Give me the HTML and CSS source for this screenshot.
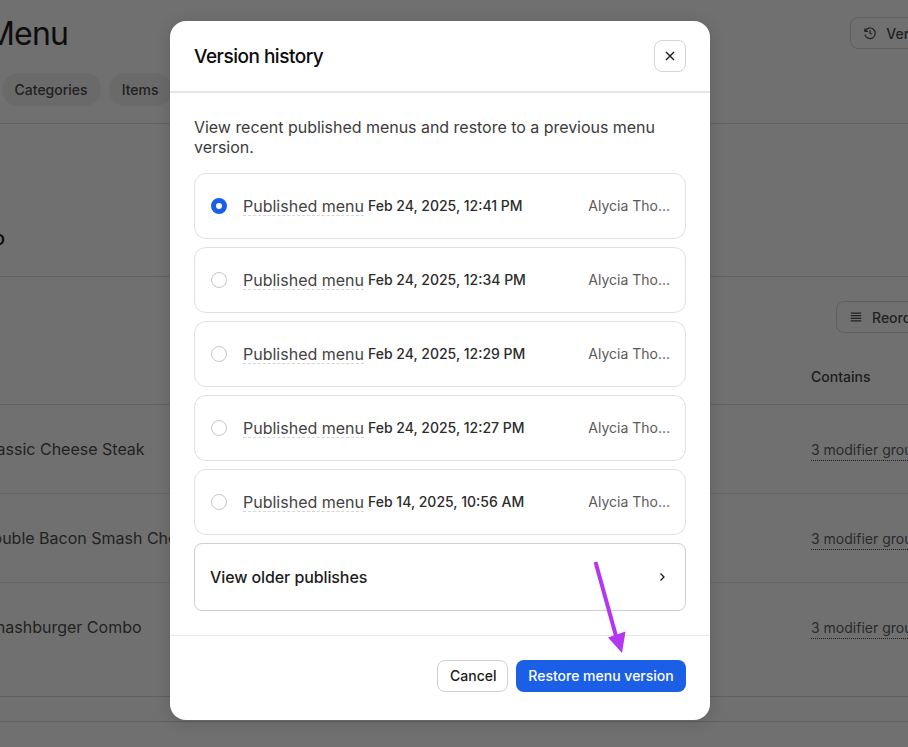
FILE: index.html
```html
<!DOCTYPE html>
<html lang="en">
<head>
<meta charset="utf-8">
<title>Version history</title>
<link rel="stylesheet" href="styles.css">
</head>
<body>
<div class="page">
  <div class="content">
    <header class="top">
      <div class="title-row">
        <h1 class="title">Menu</h1>
        <button class="ghost ghost-version"><svg class="ghost-icon" viewBox="0 0 16 16"><path d="M2.200 2.800v3.400h3.400M2.400 6.200A6 6 0 1 1 2.200 9.800M8 4.800v3.400l2.300 1.300"/></svg>Version history</button>
      </div>
      <nav class="tabs"><span class="tab">Overview</span><span class="tab">Categories</span><span class="tab">Items</span></nav>
    </header>
    <section class="section-head"><h2 class="section-title">Combo</h2></section>
    <div class="toolbar"><button class="ghost ghost-reorder"><svg class="ghost-icon" viewBox="0 0 16 16"><path d="M2 3.500h12M2 6.500h12M2 9.500h12M2 12.500h12"/></svg>Reorder items</button></div>
    <div class="row row-head"><span></span><span class="head-cell">Contains</span></div>
    <div class="row row-a"><span class="name">Classic Cheese Steak</span><span class="mods">3 modifier groups</span></div>
    <div class="row row-a"><span class="name">Double Bacon Smash Cheeseburger</span><span class="mods">3 modifier groups</span></div>
    <div class="row row-b"><span class="name">Smashburger Combo</span><span class="mods">3 modifier groups</span></div>
    <div class="row row-c"></div>
  </div>

  <div class="modal">
    <div class="modal-head">
      <h2 class="modal-title">Version history</h2>
      <button class="close" aria-label="Close"><svg viewBox="0 0 12 12" class="close-icon"><path d="M2 2l8 8M10 2l-8 8"/></svg></button>
    </div>
    <div class="modal-body">
      <p class="intro">View recent published menus and restore to a previous menu version.</p>
      <div class="options">
        <div class="option"><span class="radio radio-on"></span><span class="label">Published menu</span><span class="date">Feb 24, 2025, 12:41 PM</span><span class="author">Alycia Tho...</span></div>
        <div class="option"><span class="radio"></span><span class="label">Published menu</span><span class="date">Feb 24, 2025, 12:34 PM</span><span class="author">Alycia Tho...</span></div>
        <div class="option"><span class="radio"></span><span class="label">Published menu</span><span class="date">Feb 24, 2025, 12:29 PM</span><span class="author">Alycia Tho...</span></div>
        <div class="option"><span class="radio"></span><span class="label">Published menu</span><span class="date">Feb 24, 2025, 12:27 PM</span><span class="author">Alycia Tho...</span></div>
        <div class="option"><span class="radio"></span><span class="label">Published menu</span><span class="date">Feb 14, 2025, 10:56 AM</span><span class="author">Alycia Tho...</span></div>
        <div class="older"><span>View older publishes</span><svg viewBox="0 0 12 12" class="chevron"><path d="M4.500 2.500L8 6l-3.500 3.500"/></svg></div>
      </div>
    </div>
    <div class="modal-foot">
      <button class="btn btn-cancel">Cancel</button>
      <button class="btn btn-primary">Restore menu version</button>
    </div>
  </div>

  <svg class="arrow" viewBox="0 0 908 747"><path class="arrow-shaft" d="M595.500 562L616 636"/><path class="arrow-head" d="M608 637.500L625.500 631.500L622 653Z"/></svg>
</div>
</body>
</html>
```

FILE: styles.css
```css
* { box-sizing: border-box; }
html, body { margin: 0; height: 100%; }
body { font-family: Inter, "Liberation Sans", sans-serif; overflow: hidden; }
button { font-family: inherit; cursor: pointer; }
h1, h2, p { margin: 0; }

.page { position: relative; width: 908px; height: 747px; overflow: hidden; background: #707070; }

.content { width: 1100px; margin-left: -60px; color: #1b1b1b; }

.top { height: 124px; border-bottom: 1px solid #636363; padding-top: 16px; }
.title-row { display: flex; justify-content: space-between; align-items: flex-start; height: 57px; }
.title { font-size: 32px; font-weight: 400; line-height: 36px; color: #0d0d0d; margin-left: 46px; letter-spacing: -0.8px; }
.ghost { display: inline-flex; align-items: center; height: 32px; background: transparent; border: 1px solid #5f5f5f; border-radius: 8px; font-size: 14px; font-weight: 500; color: #222; padding: 0 12px; gap: 9px; white-space: nowrap; }
.ghost-icon { width: 14px; height: 14px; fill: none; stroke: #222; stroke-width: 1.4; flex: none; }
.ghost-version { margin-right: 40px; margin-top: 1px; }

.tabs { display: flex; gap: 8px; margin-left: -36px; }
.tab { height: 33px; padding: 0 13px; border-radius: 17px; background: #6a6a6a; font-size: 14px; font-weight: 500; color: #202020; display: inline-flex; align-items: center; }

.section-head { height: 153px; border-bottom: 1px solid #636363; padding-top: 102px; }
.section-title { font-size: 20px; line-height: 24px; font-weight: 500; color: #0d0d0d; margin-left: -4px; }

.toolbar { display: flex; justify-content: flex-end; padding-top: 24px; height: 72px; }
.ghost-reorder { width: 204px; justify-content: flex-start; }

.row { display: grid; grid-template-columns: 871px 1fr; border-bottom: 1px solid #666; }
.row-head { height: 56px; padding-top: 19px; border-bottom: 1px solid #636363; }
.head-cell { font-size: 14px; font-weight: 500; line-height: 18px; color: #1c1c1c; }
.row-a { height: 89px; padding-top: 34px; }
.row-b { height: 114px; padding-top: 34px; border-bottom-color: #5f5f5f; }
.row-c { height: 25px; border-bottom-color: #5f5f5f; }
.name { font-size: 16px; font-weight: 400; line-height: 20px; color: #222; padding-left: 41px; white-space: nowrap; }
.mods { font-size: 14px; line-height: 18px; color: #2a2a2a; justify-self: start; border-bottom: 1px dotted #222; height: 20px; margin-top: 2px; white-space: nowrap; }

.modal { position: absolute; left: 170px; top: 21px; width: 540px; height: 699px; background: #fff; border-radius: 16px; display: flex; flex-direction: column; box-shadow: 0 2px 16px rgba(0, 0, 0, 0.14); }
.modal-head { height: 72px; display: flex; align-items: center; justify-content: space-between; padding: 0 24px; border-bottom: 2px solid #e6e6e6; }
.modal-title { font-size: 19px; font-weight: 500; line-height: 24px; padding-top: 2px; color: #0c0c0c; letter-spacing: -0.5px; }
.close { width: 32px; height: 32px; padding: 0; display: flex; align-items: center; justify-content: center; background: #fff; border: 1px solid #d4d4d4; border-radius: 8px; }
.close-icon { width: 12px; height: 12px; fill: none; stroke: #1c1c1c; stroke-width: 1.4; }

.modal-body { flex: 1; padding: 24px 24px 0; border-bottom: 1px solid #e6e6e6; }
.intro { font-size: 16px; line-height: 20px; color: #3c3c3c; margin-bottom: 16px; letter-spacing: -0.03px; }
.options { display: flex; flex-direction: column; gap: 8px; }
.option { height: 66px; display: flex; align-items: center; border: 1px solid #e0e0e0; border-radius: 12px; padding: 0 15px 0 16px; }
.radio { width: 16px; height: 16px; border-radius: 50%; border: 1px solid #c8c8c8; flex: none; margin-right: 16px; }
.radio-on { border: 5px solid #1a5fe6; background: #fff; }
.label { font-size: 16px; line-height: 18px; padding-top: 2px; margin-bottom: 1px; color: #444; border-bottom: 1px dashed #d6d6d6; white-space: nowrap; }
.date { font-size: 14px; font-weight: 500; line-height: 16px; color: #2c2c2c; margin-left: 4px; white-space: nowrap; flex: 1; }
.author { font-size: 14px; line-height: 16px; color: #5a5a5a; white-space: nowrap; }
.older { height: 68px; display: flex; align-items: center; justify-content: space-between; border: 1px solid #cfcfcf; border-radius: 8px; padding: 0 17px 0 15px; font-size: 16px; font-weight: 500; letter-spacing: -0.1px; color: #1c1c1c; }
.chevron { width: 12px; height: 12px; fill: none; stroke: #1c1c1c; stroke-width: 1.3; }

.modal-foot { height: 84px; display: flex; justify-content: flex-end; gap: 8px; padding: 24px 24px 0; }
.btn { height: 32px; border-radius: 8px; font-size: 14px; font-weight: 500; padding: 0 12px 2px; }
.btn-cancel { background: #fff; border: 1px solid #d0d0d0; color: #1c1c1c; width: 71px; }
.btn-primary { background: #1a5fe6; border: 0; color: #fff; width: 170px; }

.arrow { position: absolute; inset: 0; width: 908px; height: 747px; pointer-events: none; }
.arrow-shaft { stroke: #b336f0; stroke-width: 4; fill: none; }
.arrow-head { fill: #b336f0; }
```
